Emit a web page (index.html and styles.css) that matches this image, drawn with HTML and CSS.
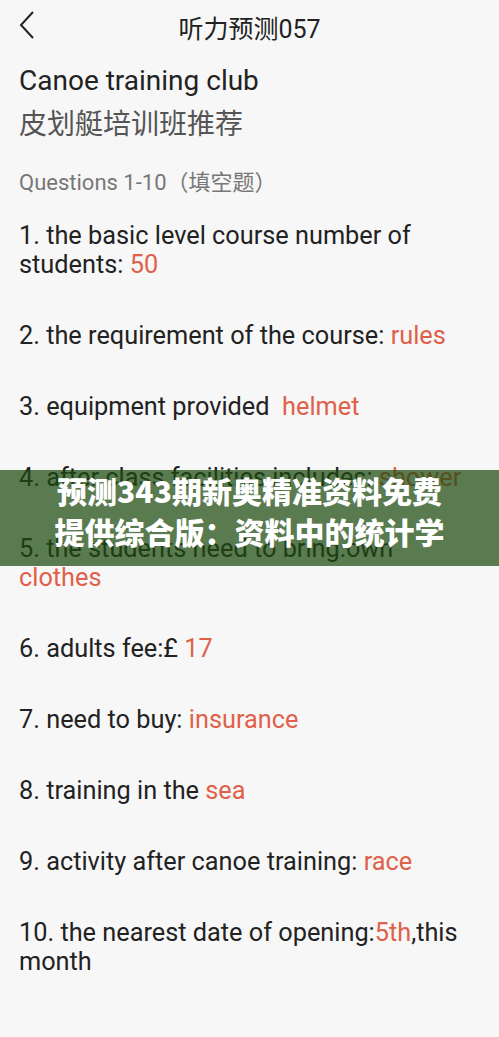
FILE: index.html
```html
<!DOCTYPE html>
<html lang="zh">
<head>
<meta charset="utf-8">
<title>听力预测057</title>
<link rel="stylesheet" href="styles.css">
</head>
<body>
<div class="page">
  <header class="topbar">
    <span class="back">
      <svg width="18" height="28" viewBox="0 0 18 28"><path d="M15 1 L3 14 L15 27" fill="none" stroke="#222" stroke-width="2"/></svg>
    </span>
    <h1 class="title">听力预测057</h1>
  </header>
  <main class="content">
    <h2 class="en-title">Canoe training club</h2>
    <h3 class="cn-title">皮划艇培训班推荐</h3>
    <p class="section">Questions 1-10（填空题）</p>
    <ol class="items">
      <li>1. the basic level course number of students: <span class="ans">50</span></li>
      <li>2. the requirement of the course: <span class="ans">rules</span></li>
      <li>3. equipment provided&nbsp; <span class="ans">helmet</span></li>
      <li>4. after class facilities includes: <span class="ans">shower</span></li>
      <li>5. the students need to bring:own <span class="ans">clothes</span></li>
      <li>6. adults fee:£ <span class="ans">17</span></li>
      <li>7. need to buy: <span class="ans">insurance</span></li>
      <li>8. training in the <span class="ans">sea</span></li>
      <li>9. activity after canoe training: <span class="ans">race</span></li>
      <li>10. the nearest date of opening:<span class="ans">5th</span>,this month</li>
    </ol>
  </main>
  <div class="banner"><div class="banner-text">预测343期新奥精准资料免费<br>提供综合版：资料中的统计学</div></div>
</div>
</body>
</html>
```

FILE: styles.css
```css
html, body {
  margin: 0;
  padding: 0;
  background: #f7f7f7;
}
body {
  font-family: Roboto, "Noto Sans CJK SC", sans-serif;
  color: #222;
}
.page {
  position: relative;
  width: 499px;
  height: 1037px;
  overflow: hidden;
}
.topbar {
  position: relative;
  height: 56px;
  display: flex;
  align-items: center;
  justify-content: center;
}
.back {
  position: absolute;
  left: 18px;
  top: 11px;
  display: block;
  line-height: 0;
}
.title {
  margin: 0;
  font-size: 25px;
  font-weight: 400;
  color: #222;
  transform: translateY(-1px);
}
.content {
  padding: 0 30px 0 19px;
}
.en-title {
  margin: 8px 0 0;
  font-size: 28px;
  font-weight: 400;
  line-height: 34px;
  color: #222;
}
.cn-title {
  margin: 8px 0 0;
  font-size: 28px;
  font-weight: 400;
  line-height: 38px;
  color: #555;
}
.section {
  margin: 24px 0 0;
  font-size: 22px;
  line-height: 30px;
  color: #777;
}
.items {
  list-style: none;
  margin: 23px 0 0;
  padding: 0;
  display: flex;
  flex-direction: column;
  gap: 42px;
}
.items li {
  font-size: 25.3px;
  line-height: 29px;
  color: #222;
}
.ans {
  color: #e0604a;
}
.banner {
  position: absolute;
  left: 0;
  right: 0;
  top: 470px;
  height: 96px;
  background: rgba(29, 74, 15, 0.72);
  display: flex;
  align-items: center;
  justify-content: center;
}
.banner-text {
  color: #fff;
  font-weight: 900;
  font-size: 30px;
  line-height: 41px;
  text-align: center;
  font-family: "Noto Sans CJK SC", sans-serif;
  transform: translateY(-7px);
}
```
